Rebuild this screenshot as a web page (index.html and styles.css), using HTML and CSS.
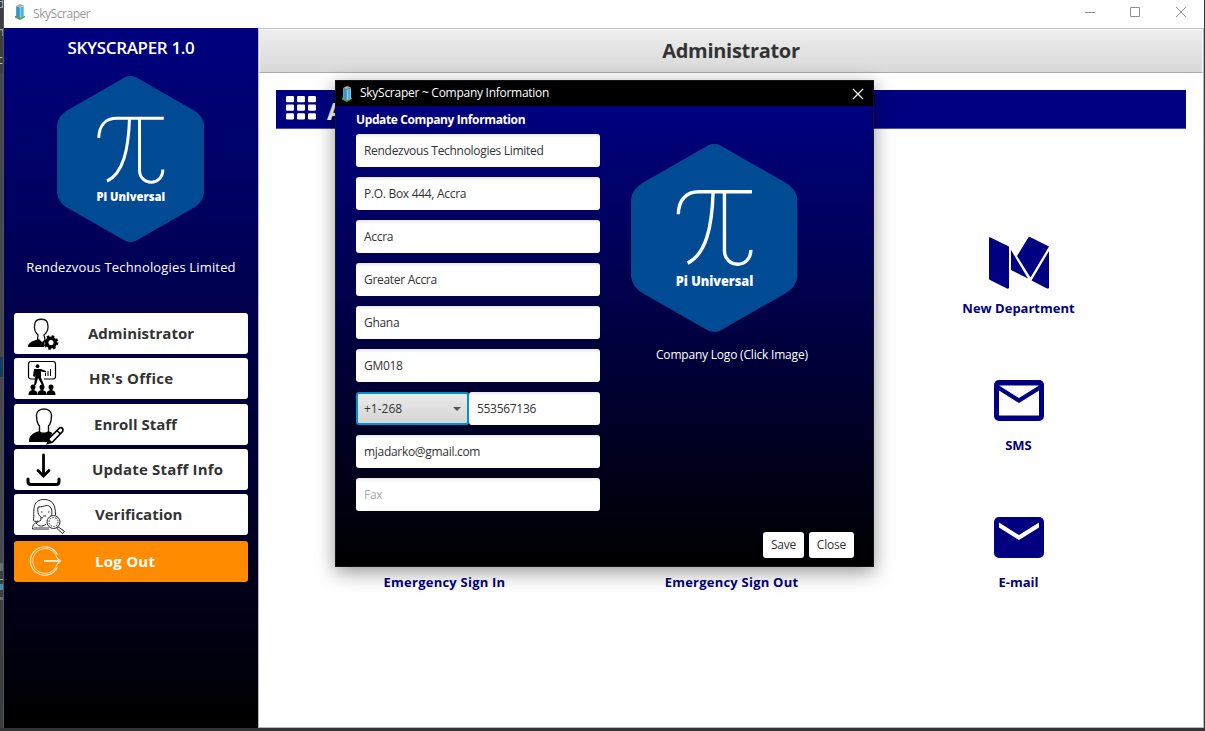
FILE: index.html
```
<!DOCTYPE html>
<html lang="en">
<head>
<meta charset="utf-8">
<title>SkyScraper</title>
<link rel="stylesheet" href="styles.css">
</head>
<body>
<svg class="defs" aria-hidden="true">
  <symbol id="pi-logo" viewBox="0 0 147 166">
    <path fill="#004b94" d="M68 1.3Q73.5-1.2 79 1.3L137 34.5Q146 40 147 49V117Q146 126 137 131.500L79 164.700Q73.500 167.200 68 164.700L10 131.500Q1 126 0 117V49Q1 40 10 34.500Z"/>
    <g fill="none" stroke="#fff" stroke-width="3"><path d="M41.800 62C42 49 49 42.200 60 42.200H106.800M72.500 42.500C71.500 73 66.500 97 50 105.200M82.500 42.500V94C82.500 110.300 106 110.300 105.800 93.500"/></g>
    <text class="logo-text" x="39.500" y="125.200" textLength="68.500" lengthAdjust="spacingAndGlyphs">Pi Universal</text>
  </symbol>
  <symbol id="tower" viewBox="0 0 12 16">
    <path fill="#5f9a3e" d="M1 12l5-2 5 2v1l-5 3-5-2.500z"/><path fill="#3fa9d8" d="M2 2l4 1.500V14l-4-1.500z"/><path fill="#78cbed" d="M6 3.500L10 2v10.500L6 14z"/><path fill="#b9a9a8" d="M2 2l4-2 4 1.500-4 2z"/><path stroke="#276c91" stroke-width=".6" d="M4 3v10M8 3v10"/>
  </symbol>
</svg>

<div class="desktop">
  <div class="edge"><span>d</span><span>n</span><span>c</span></div>
  <main class="window">
    <header class="titlebar">
      <svg class="app-icon"><use href="#tower"/></svg>
      <span class="app-name">SkyScraper</span>
      <svg class="controls" width="102" height="12" fill="none" stroke="#8f8f8f"><path d="M0 6.500h10M45.500 1.500h9v9h-9zM91 1l10 10M101 1L91 11"/></svg>
    </header>
    <div class="workspace">
      <aside class="sidebar">
        <h1>SKYSCRAPER 1.0</h1>
        <svg class="side-logo"><use href="#pi-logo"/></svg>
        <p class="company">Rendezvous Technologies Limited</p>
        <nav class="menu">
          <button class="item admin">
            <svg viewBox="0 0 40 41"><path fill="none" stroke="#111" stroke-width="1.300" d="M25 26l-1-4c4-3 4.500-8 3.500-12-1.500-5-11-5-12.500 0-1 4-.5 9 3 12l-.5 5"/><path fill="#000" d="M8 34c0-4 4-6 8-7l3-1 3 3 3-2-1 7z"/><circle cx="31" cy="29.500" r="4.300" fill="none" stroke="#000" stroke-width="3.500"/><circle cx="31" cy="29.500" r="6.300" fill="none" stroke="#000" stroke-width="2.200" stroke-dasharray="2.500 2.450"/></svg>
            <span>Administrator</span>
          </button>
          <button class="item office">
            <svg viewBox="0 0 40 41"><path fill="none" stroke="#000" stroke-width="1.200" d="M16 21h-5q-2.500 0-2.500-2.500V6q0-2.500 2.500-2.500h22q2.500 0 2.500 2.500v12.500Q35.500 21 33 21h-9"/><circle cx="17.500" cy="8.200" r="1.900"/><path d="M14 11h7l5 2v1.500l-5-1v6l3 7.500h-2l-4-7-2 7h-2l2-13-1 5-2-1z"/><path stroke="#000" d="M25.500 15v3M28 13v5M30.500 11v7"/><circle cx="13" cy="29" r="2.500"/><path d="M8.500 37c0-4 2-4.500 4.500-4.500s4.500.5 4.500 4.500z"/><path d="M11.500 30h3v4h-3zM20.500 30h3v4h-3zM29.500 30h3v4h-3z"/><circle cx="22" cy="29" r="2.500"/><path d="M17.500 37c0-4 2-4.500 4.500-4.500s4.500.5 4.500 4.500z"/><circle cx="31" cy="29" r="2.500"/><path d="M26.500 37c0-4 2-4.500 4.500-4.500s4.500.5 4.500 4.500z"/></svg>
            <span>HR's Office</span>
          </button>
          <button class="item enroll">
            <svg viewBox="0 0 40 41"><path fill="none" stroke="#111" stroke-width="1.400" d="M19.500 28v-6c-3-3-3-8-3-11 0-8 15-8 15 0 0 3 0 8-3 11v6"/><path d="M9 38c0-7 4-9 10.500-11 2 2 6 2 9 0l4 2-5 9z"/><path fill="#fff" stroke="#000" stroke-width="1.700" d="M29 34.500L39.500 24q2-1 3 .5t0 3L32.500 38l-5 1.500z"/><path stroke="#000" stroke-width="1.500" d="M37 26.500l3.500 3.500"/><path d="M29 35l3.500 3.500-5.500 1.500z"/></svg>
            <span>Enroll Staff</span>
          </button>
          <button class="item update">
            <svg viewBox="0 0 40 41" fill="none" stroke="#000" stroke-linecap="round"><path stroke-width="2.800" d="M23.500 6v21M18 21.500l5.500 5.500 5.500-5.500"/><path stroke-width="3" d="M8 30v2.500q0 3 3 3h25q3 0 3-3V30"/></svg>
            <span>Update Staff Info</span>
          </button>
          <button class="item verify">
            <svg viewBox="0 0 40 41" fill="none" stroke="#222"><path d="M18 27c-3 1-4.500 0-4.500-1 1-9-2-19 9-20.500 10-.5 13 5 13 15.500M18 13c7 0 10-4 13 1 1.500 3 1 6 0 8M18 13c-1 6 1 10 5 11"/><path d="M21 23v3l-3 2c-4 1-5.500 3-5.500 7H29M16 29c4 5 8 3 10 1M21 18h1.500M28 18h1.500M23 22h3"/><path stroke="#999" stroke-width="2" d="M14 34h15"/><circle cx="33.500" cy="28" r="6.500" fill="#fff"/><circle cx="33.500" cy="28" r="4.500" stroke-dasharray="1.500 1.300"/><path d="M38.500 33l6 4.500-2 2-5.500-5z"/></svg>
            <span>Verification</span>
          </button>
          <button class="item logout">
            <svg viewBox="0 0 40 41" fill="none" stroke="#ffe7c6"><path stroke-width="1.200" d="M37.500 14A14.200 14.200 0 1 0 37.500 26"/><path stroke-width=".9" d="M36 14A12.400 12.400 0 1 0 36 26"/><path stroke-width="1.200" d="M24 20.500h15M24 19.500h15M36 14.500l1.500 3 3 2.500-3 2.500-1.500 3"/></svg>
            <span>Log Out</span>
          </button>
        </nav>
      </aside>
      <section class="content">
        <h2 class="page-title"><span>Administrator</span></h2>
        <div class="banner">
          <svg width="30" height="24" fill="#fff"><rect width="8" height="6.300" rx="1.300"/><rect x="11" width="8" height="6.300" rx="1.300"/><rect x="22" width="8" height="6.300" rx="1.300"/><rect y="8.500" width="8" height="6.300" rx="1.300"/><rect x="11" y="8.500" width="8" height="6.300" rx="1.300"/><rect x="22" y="8.500" width="8" height="6.300" rx="1.300"/><rect y="17.200" width="8" height="6.300" rx="1.300"/><rect x="11" y="17.200" width="8" height="6.300" rx="1.300"/><rect x="22" y="17.200" width="8" height="6.300" rx="1.300"/></svg>
          <span>A</span>
        </div>
        <div class="tiles">
          <div class="tile dept"><svg width="60" height="52" fill="#000080"><path d="M0 1q0-1 1.500-.5L20 9.500V51q-1 1-2 .5L1 43Q0 42.500 0 41.500zM22 13l17 28.500L22 33zM28 19L39 1q1-1.500 2.500-.8L60 9.500 41.500 40.500zM60 14v37q-1 .8-2 .5L42.500 43.500z"/></svg><span>New Department</span></div>
          <div class="tile sms"><svg width="50" height="41"><rect width="50" height="41" rx="5" fill="#000080"/><path fill="#fff" d="M5 10.500l20 12.500 20-12.500V35.500H5zM5 5.500h40L25 18z"/></svg><span>SMS</span></div>
          <div class="tile sign-in"><span>Emergency Sign In</span></div>
          <div class="tile sign-out"><span>Emergency Sign Out</span></div>
          <div class="tile email"><svg width="50" height="41"><rect width="50" height="41" rx="5" fill="#000080"/><path fill="#fff" d="M5 5.500l20 12.500 20-12.500v5L25 23 5 10.500z"/></svg><span>E-mail</span></div>
        </div>
      </section>
    </div>
  </main>
</div>

<div class="dialog">
  <header class="dialog-bar">
    <svg class="app-icon"><use href="#tower"/></svg>
    <span>SkyScraper ~ Company Information</span>
    <svg class="close" width="10" height="10" stroke="#fff" stroke-width="1.200"><path d="M0 0l10 10M10 0L0 10"/></svg>
  </header>
  <div class="dialog-body">
    <form class="form">
      <h3>Update Company Information</h3>
      <div class="field">Rendezvous Technologies Limited</div>
      <div class="field">P.O. Box 444, Accra</div>
      <div class="field">Accra</div>
      <div class="field">Greater Accra</div>
      <div class="field">Ghana</div>
      <div class="field">GM018</div>
      <div class="phone"><div class="combo">+1-268<i></i></div><div class="field">553567136</div></div>
      <div class="field">mjadarko@gmail.com</div>
      <div class="field hint">Fax</div>
    </form>
    <div class="side">
      <svg class="big-logo"><use href="#pi-logo"/></svg>
      <p>Company Logo (Click Image)</p>
      <div class="actions"><button>Save</button><button>Close</button></div>
    </div>
  </div>
</div>
</body>
</html>
```
FILE: styles.css
```
* { box-sizing: border-box; margin: 0; padding: 0; }
body { width: 1205px; height: 731px; overflow: hidden; background: #343538; font: 12px "Open Sans", sans-serif; color: #333; position: relative; }
button { font: inherit; border: 0; color: inherit; }
svg { display: block; flex: none; overflow: visible; }
span, p, h1, h2, h3, .field, .combo { white-space: nowrap; }
.defs { position: absolute; width: 0; height: 0; }
.logo-text { font: 800 12.200px "Open Sans", sans-serif; fill: #fff; letter-spacing: 0; }
.desktop { display: flex; height: 728px; }
.edge { width: 4px; overflow: hidden; color: #bbb; border-right: 1px solid #555; background: linear-gradient(#3c3f41 72px, #45494d 73px 357px, #123f5c 357px 377px, #45494d 377px 563px, #6a6d70 563px 571px, #3c3f41 571px 579px, #aaa 579px 580px, #3c3f41 580px 584px, #3f8fa8 584px 590px, #3c3f41 590px 597px, #6a6d70 597px 600px, #3c3f41 600px); }
.edge span { display: block; margin-left: -3px; height: 28px; line-height: 8px; }
.window { width: 1200px; background: #fff; display: flex; flex-direction: column; }
.titlebar { height: 28px; display: flex; align-items: center; padding: 0 17px 4px 10px; color: #999; }
.app-icon { width: 12px; height: 16px; }
.app-name { margin-left: 7px; padding-top: 2px; letter-spacing: -.45px; }
.controls { margin-left: auto; }
.workspace { flex: 1; display: flex; }
.sidebar { width: 254px; background: linear-gradient(#000080, #000); color: #fff; padding: 7px 10px 0; }
.sidebar h1 { font-size: 17px; line-height: 25px; font-weight: 600; text-align: center; letter-spacing: -.35px; }
.side-logo { width: 147px; height: 166px; margin: 16px auto 0 43px; }
.company { margin-top: 15px; font-size: 13px; line-height: 20px; text-align: center; letter-spacing: .16px; }
.menu { display: flex; flex-direction: column; gap: 4px; margin-top: 36px; color: #333; }
.item { width: 234px; height: 41px; border-radius: 3px; background: #fff; display: flex; align-items: center; text-align: left; font-weight: 700; font-size: 15px; }
.item svg { width: 40px; height: 41px; margin-left: 6px; }
.item span { margin-left: 28px; padding-bottom: 2px; }
.item.office span { margin-left: 29px; letter-spacing: .27px; }
.enroll { margin-top: 1px; }
.item.enroll span { margin-left: 34px; }
.item.update span { margin-left: 32px; letter-spacing: .2px; }
.item.verify span, .item.logout span { margin-left: 35px; }
.item.logout span { letter-spacing: .25px; }
.logout { margin-top: 2px; background: #ff8c00; color: #fff; }
.content { flex: 1; border: 1px solid #b8b8b8; border-top-color: #c4c4c4; }
.page-title { height: 44px; border: 1px solid #f8f8f8; border-bottom: 1px solid #aaa; background: linear-gradient(#eee, #d9d9d9); display: flex; align-items: center; justify-content: center; padding-bottom: 2px; font-size: 20px; font-weight: 700; letter-spacing: -.3px; }
.banner { margin: 17px 17px 0; height: 39px; border: 1px solid #5050a8; border-width: 0 0 1px; background: #000080; display: flex; align-items: center; padding-left: 10px; color: #fff; font-size: 24px; font-weight: 700; }
.banner svg { margin-bottom: 2px; }
.banner span { margin: 2px 0 0 11px; }
.tiles { display: grid; grid-template-columns: repeat(3, 287px); grid-template-rows: 81px 137px 137px; grid-template-areas: ". . dept" ". . sms" "in out email"; margin-left: 42px; padding-top: 107px; color: #000080; font-size: 13px; line-height: 18px; font-weight: 700; }
.tile { display: flex; flex-direction: column; align-items: center; justify-content: flex-end; }
.dept { grid-area: dept; }
.dept span { margin-top: 10px; }
.sms { grid-area: sms; }
.sign-in { grid-area: in; letter-spacing: .23px; }
.sign-out { grid-area: out; letter-spacing: .23px; }
.email { grid-area: email; }
.sms span, .email span { margin-top: 15px; }
.dialog { position: absolute; left: 335px; top: 80px; width: 539px; height: 487px; border: 1px solid #151515; box-shadow: 0 5px 18px rgba(0,0,0,.42); background: #000; color: #fff; display: flex; flex-direction: column; letter-spacing: -.2px; }
.dialog-bar { height: 25px; display: flex; align-items: center; padding: 0 10px 0 5px; }
.dialog-bar span { margin-left: 7px; padding-bottom: 2px; letter-spacing: -.27px; }
.close { margin-left: auto; }
.dialog-body { flex: 1; background: linear-gradient(#000080, #000); display: flex; padding-left: 20px; }
.form { width: 244px; display: flex; flex-direction: column; gap: 10px; letter-spacing: -.3px; }
.form h3 { height: 18px; padding-top: 5px; font-size: 12px; line-height: 17px; letter-spacing: -.38px; }
.field, .combo { height: 33px; padding: 0 8px; line-height: 34px; border-radius: 3px; background: linear-gradient(#e8e8e8, #fff 4px); color: #333; }
.field.hint { color: #aaa; }
.phone { display: grid; grid-template-columns: 113px 131px; }
.combo { border: 2px solid #0093c9; padding: 0 6px; line-height: 30px; letter-spacing: 0; background: linear-gradient(#eaeaea, #d5d5d5); display: flex; justify-content: space-between; align-items: center; }
.combo i { border: 4px solid transparent; border-top-color: #555; border-bottom: 0; }
.side { flex: 1; display: flex; flex-direction: column; padding: 38px 19px 8px 31px; }
.big-logo { width: 166.500px; height: 188px; }
.side p { margin: 14px 0 0 25px; line-height: 17px; }
.actions { margin-top: auto; display: flex; justify-content: flex-end; gap: 5px; }
.actions button { height: 26px; width: 41px; padding-bottom: 1px; border-radius: 3px; background: #fff; color: #333; letter-spacing: -.2px; }
.actions button + button { width: 45px; }
```
